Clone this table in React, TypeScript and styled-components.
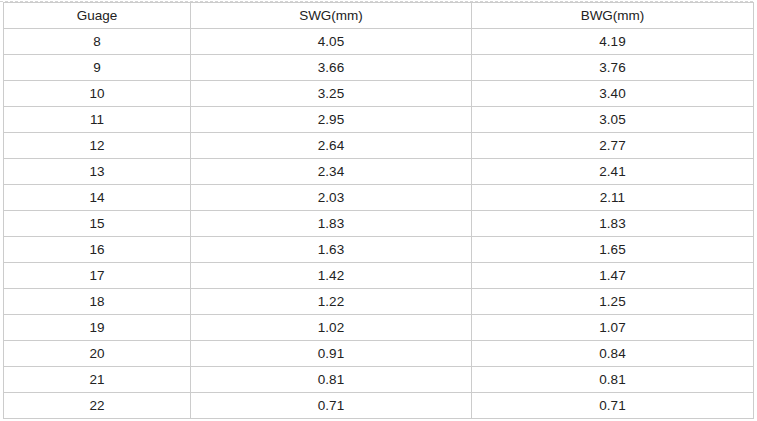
import styled, { createGlobalStyle } from 'styled-components';

const GlobalStyle = createGlobalStyle`
  html, body {
    margin: 0;
    padding: 0;
    background: #ffffff;
  }
  body {
    font-family: "Liberation Sans", Arial, sans-serif;
    color: #222222;
  }
`;

const Page = styled.div`
  width: 753px;
  margin-top: 1px;
  border-top: 1px dashed #d4d4d4;
`;

const Table = styled.table`
  margin-left: 3px;
  width: 750px;
  border-collapse: collapse;
  table-layout: fixed;
  font-size: 13.5px;
`;

const Cell = styled.td`
  height: 25px;
  padding: 0;
  border: 1px solid #cccccc;
  text-align: center;
  vertical-align: middle;
  color: #222222;
  line-height: 15px;
`;

const rows: [string, string, string][] = [
  ['8', '4.05', '4.19'],
  ['9', '3.66', '3.76'],
  ['10', '3.25', '3.40'],
  ['11', '2.95', '3.05'],
  ['12', '2.64', '2.77'],
  ['13', '2.34', '2.41'],
  ['14', '2.03', '2.11'],
  ['15', '1.83', '1.83'],
  ['16', '1.63', '1.65'],
  ['17', '1.42', '1.47'],
  ['18', '1.22', '1.25'],
  ['19', '1.02', '1.07'],
  ['20', '0.91', '0.84'],
  ['21', '0.81', '0.81'],
  ['22', '0.71', '0.71'],
];

const App = () => {
  return (
    <>
      <GlobalStyle />
      <Page>
        <Table>
          <colgroup>
            <col style={{ width: 187 }} />
            <col style={{ width: 281 }} />
            <col style={{ width: 282 }} />
          </colgroup>
          <tbody>
            <tr>
              <Cell>Guage</Cell>
              <Cell>SWG(mm)</Cell>
              <Cell>BWG(mm)</Cell>
            </tr>
            {rows.map(([g, swg, bwg]) => (
              <tr key={g}>
                <Cell>{g}</Cell>
                <Cell>{swg}</Cell>
                <Cell>{bwg}</Cell>
              </tr>
            ))}
          </tbody>
        </Table>
      </Page>
    </>
  );
};

export default App;
